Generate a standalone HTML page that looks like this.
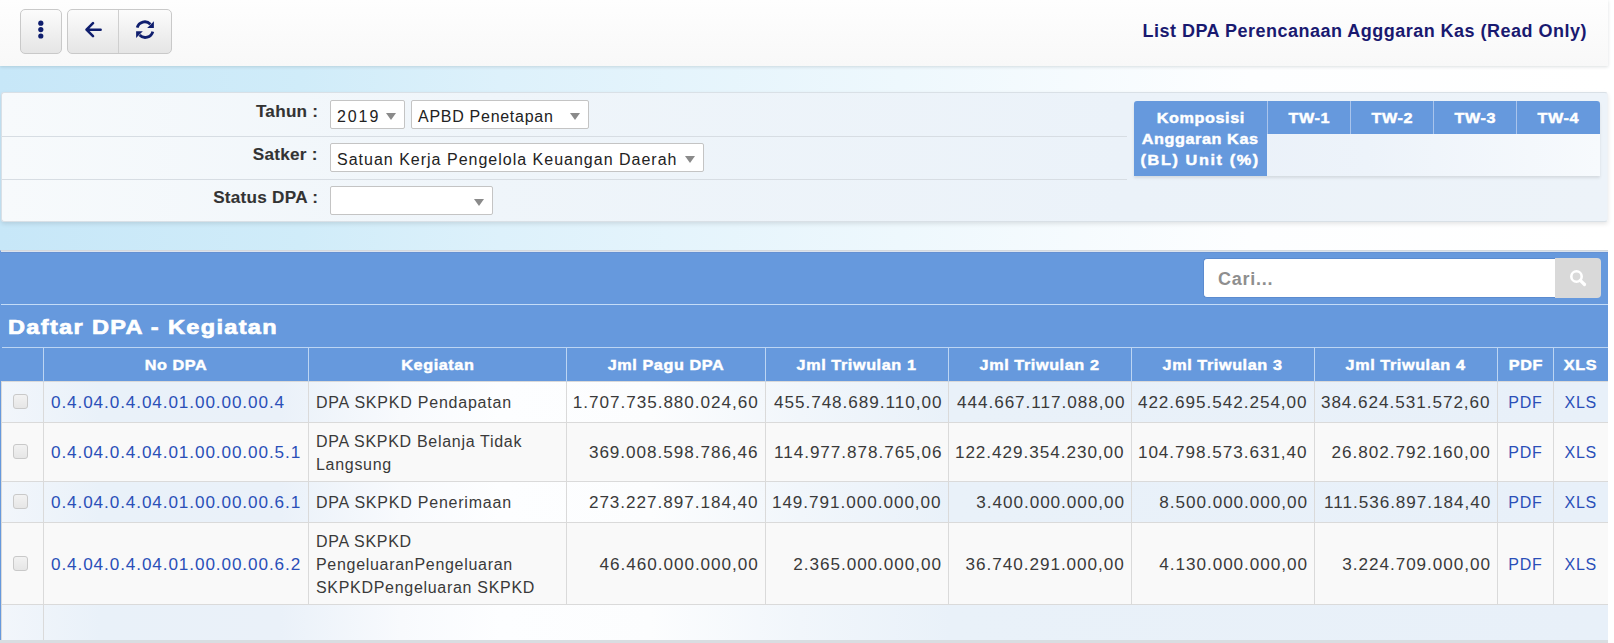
<!DOCTYPE html>
<html><head><meta charset="utf-8"><style>
*{box-sizing:border-box}
html,body{margin:0;padding:0;width:1614px;height:643px;overflow:hidden;background:#fff;font-family:"Liberation Sans",sans-serif}
#wrap{position:absolute;left:0;top:0;width:1608px;height:643px;background:linear-gradient(90deg,rgb(199,231,248) 0px,rgb(208,236,249) 300px,rgb(221,241,251) 500px,rgb(238,248,253) 900px,rgb(253,254,255) 1250px,#fff 1608px)}
#hdr{position:absolute;left:0;top:0;width:1608px;height:66px;background:linear-gradient(#fefefe,#f8f8f8);box-shadow:0 1px 3px rgba(40,60,70,.16)}
.btn{position:absolute;top:9px;height:45px;border:1px solid #c9c9c9;border-radius:5px;background:linear-gradient(#fcfcfc,#e5e5e5)}
.btn svg{position:absolute}
#title{position:absolute;right:21px;top:21px;font-weight:bold;font-size:18px;letter-spacing:0.49px;color:#191970;white-space:nowrap}

#filter{position:absolute;left:1px;top:92px;width:1607px;height:130px;border:1px solid #d9e0e6;border-right-color:#eef2f6;border-radius:3px;background:linear-gradient(90deg,#f7fafc 0%,#eff5fa 30%,#ebf2f9 70%,#edf3f9 100%);box-shadow:0 2px 4px rgba(0,0,0,.10)}
.frow{position:absolute;left:0;width:1125px;border-bottom:1px solid #d7dde3}
.flab b{display:inline-block;transform:scaleX(1.07);transform-origin:100% 50%}
.flab{position:absolute;right:1289px;font-weight:bold;font-size:16px;letter-spacing:0.25px;-webkit-text-stroke:0.1px #333;color:#333;white-space:nowrap}
.sel{position:absolute;height:29px;border:1px solid #c4c4c4;border-radius:2px;background:#fff;font-size:16px;color:#222;padding-left:6px;line-height:31px;white-space:nowrap;letter-spacing:0.7px}
.sel .car{position:absolute;right:8px;top:12px;width:0;height:0;border-left:5px solid transparent;border-right:5px solid transparent;border-top:7px solid #8a8a8a}

#komp{position:absolute;left:1134px;top:101px;width:466px;height:75px;box-shadow:0 2px 3px rgba(0,0,0,.10);background:linear-gradient(90deg,#e9f0f8 0%,#edf3fa 50%,#f7fafd 100%);border-radius:3px 3px 0 0;overflow:hidden}
.kh{position:absolute;top:0;background:#6699dd;color:#fff;font-weight:bold;font-size:15px;letter-spacing:0.55px;-webkit-text-stroke:0.45px #fff;text-align:center;white-space:nowrap}

#tbl{position:absolute;left:0;top:250px;width:1608px;height:393px;border:1px solid #d3d8dd;border-left-color:transparent;border-bottom:none;border-right:none;background:#6699dd}
#search{position:absolute;left:1202px;top:7px;width:353px;height:40px;background:#fff;border-radius:4px 0 0 4px;border:1px solid #5b8bcf;border-right:none}
#search span{position:absolute;left:14px;top:9.8px;font-size:18px;font-weight:bold;color:#8f8f8f;letter-spacing:0.75px}
#sbtn{position:absolute;left:1554px;top:7px;width:46px;height:40px;background:#d9d9d9;border-radius:0 4px 4px 0}
#caption{position:absolute;left:0;top:53px;width:1607px;height:43px;border-top:1px solid #c4dcf7;color:#fff;font-weight:bold;font-size:21px;letter-spacing:1.2px;padding-left:7px;line-height:44px;-webkit-text-stroke:0.7px #fff}
#caption span{display:inline-block;transform:scaleX(1.12);transform-origin:0 50%}
table{position:absolute;left:0;top:96px;border-collapse:collapse;table-layout:fixed;width:1606px}
th b,.kh b{display:inline-block;transform:scaleX(1.08)}
th{background:#6699dd;color:#fff;font-weight:bold;font-size:15px;letter-spacing:0.55px;-webkit-text-stroke:0.45px #fff;height:34px;border:1px solid #bcd5f3;border-bottom:none;text-align:center;padding:0;white-space:nowrap}
td{border:1px solid #dadada;font-size:16px;color:#3a3a3a;padding:2px 7px 0;white-space:nowrap;letter-spacing:0.78px;vertical-align:middle}
td.n{text-align:right;letter-spacing:0.9px;padding:2px 6px 0 2px}
.v{display:inline-block;transform:scaleX(1.07);transform-origin:100% 50%}
td.lk .v{transform-origin:0 50%}
td.lk{color:#2a4fb8;letter-spacing:0.85px}
td.lk2{color:#2a4fb8;text-align:center}
tr.odd td{background:linear-gradient(90deg,#f2f6fb 0px,#e9f1f9 100px,#eaf1f9 280px,#f8fafd 400px,#fdfeff 500px,#fcfdfe 650px,#f1f6fb 800px,#e9f1f9 950px,#e8f0f9 1608px) fixed}
tr.even td{background:#f9f9f9}
.cb{display:block;margin:-3px 0 0 4px;width:15px;height:15px;border:1px solid #c9c9c9;border-radius:3px;background:linear-gradient(#f2f2f2,#e6e6e6)}
td:last-child,th:last-child{border-right:none}
.kg{white-space:normal;line-height:23px;letter-spacing:0.7px}
</style></head><body>
<div id="wrap">
  <div id="hdr">
    <div class="btn" style="left:20px;width:42px"></div>
    <div class="btn" style="left:67px;width:105px"></div>
    <div style="position:absolute;left:118px;top:10px;width:1px;height:43px;background:#cfcfcf"></div>
    <svg style="position:absolute;left:0;top:0" width="200" height="66" viewBox="0 0 200 66">
      <g fill="#0f1e6e"><circle cx="40.8" cy="23.2" r="2.6"/><circle cx="40.8" cy="29.6" r="2.6"/><circle cx="40.8" cy="36" r="2.6"/></g>
      <g fill="none" stroke="#0f1e6e" stroke-width="2.6" stroke-linecap="round" stroke-linejoin="round"><path d="M93 23.2 L86.5 29.7 L93 36.2 M87 29.7 H100.6"/></g>
      <g fill="none" stroke="#0f1e6e" stroke-width="2.8"><path d="M137.2 27.6 A7.8 7.8 0 0 1 150.4 24.2"/><path d="M152.8 31.6 A7.8 7.8 0 0 1 139.6 35"/></g>
      <g fill="#0f1e6e"><path d="M153.9 21.2 L153.9 27.9 L147.2 27.9 Z"/><path d="M136.1 38 L136.1 31.3 L142.8 31.3 Z"/></g>
    </svg>
    <div id="title">List DPA Perencanaan Agggaran Kas (Read Only)</div>
  </div>

  <div id="filter">
    <div class="frow" style="top:0;height:44px"></div>
    <div class="frow" style="top:44px;height:43px"></div>
    <div class="flab" style="top:10px"><b>Tahun :</b></div>
    <div class="flab" style="top:53px"><b>Satker :</b></div>
    <div class="flab" style="top:96px"><b>Status DPA :</b></div>
  </div>
  <div class="sel" style="left:330px;top:100px;width:75px;letter-spacing:1.9px">2019<i class="car"></i></div>
  <div class="sel" style="left:411px;top:100px;width:178px;letter-spacing:0.72px">APBD Penetapan<i class="car"></i></div>
  <div class="sel" style="left:330px;top:143px;width:374px;letter-spacing:1px">Satuan Kerja Pengelola Keuangan Daerah<i class="car"></i></div>
  <div class="sel" style="left:330px;top:186px;width:163px"><i class="car"></i></div>
  <div id="komp">
    <div class="kh" style="left:0;width:133px;height:75px;padding-top:6px;line-height:21px"><b>Komposisi</b><br><b>Anggaran Kas</b><br><b style="letter-spacing:1.5px">(BL) Unit (%)</b></div>
    <div class="kh" style="left:133px;width:83px;height:33px;line-height:33px;border-left:1px solid #a9c4ec"><b>TW-1</b></div>
    <div class="kh" style="left:216px;width:83px;height:33px;line-height:33px;border-left:1px solid #a9c4ec"><b>TW-2</b></div>
    <div class="kh" style="left:299px;width:83px;height:33px;line-height:33px;border-left:1px solid #a9c4ec"><b>TW-3</b></div>
    <div class="kh" style="left:382px;width:84px;height:33px;line-height:33px;border-left:1px solid #a9c4ec"><b>TW-4</b></div>
  </div>

  <div id="tbl">
    <div style="position:absolute;left:0;top:0;width:1607px;height:1px;background:#dae3ee"></div><div style="position:absolute;left:0;top:1px;width:1607px;height:1px;background:#6490d2"></div>
    <div id="search"><span>Cari...</span></div>
    <div id="sbtn"><svg width="46" height="40" viewBox="0 0 46 40"><circle cx="21.5" cy="18.5" r="5.2" fill="none" stroke="#fff" stroke-width="2.6"/><line x1="25.3" y1="22.3" x2="29.5" y2="26.5" stroke="#fff" stroke-width="3.2" stroke-linecap="round"/></svg></div>
    <div id="caption"><span>Daftar DPA - Kegiatan</span></div>
    <table>
      <colgroup><col style="width:42px"><col style="width:265px"><col style="width:258px"><col style="width:199px"><col style="width:183px"><col style="width:183px"><col style="width:183px"><col style="width:183px"><col style="width:56px"><col style="width:54px"></colgroup>
      <tr><th style="border-left:none"></th><th><b>No DPA</b></th><th><b>Kegiatan</b></th><th><b>Jml Pagu DPA</b></th><th><b>Jml Triwulan 1</b></th><th><b>Jml Triwulan 2</b></th><th><b>Jml Triwulan 3</b></th><th><b>Jml Triwulan 4</b></th><th><b>PDF</b></th><th style="border-right:none"><b>XLS</b></th></tr>
      <tr class="odd" style="height:41px"><td><i class="cb"></i></td><td class="lk"><span class="v">0.4.04.0.4.04.01.00.00.00.4</span></td><td>DPA SKPKD Pendapatan</td><td class="n"><span class="v">1.707.735.880.024,60</span></td><td class="n"><span class="v">455.748.689.110,00</span></td><td class="n"><span class="v">444.667.117.088,00</span></td><td class="n"><span class="v">422.695.542.254,00</span></td><td class="n"><span class="v">384.624.531.572,60</span></td><td class="lk2">PDF</td><td class="lk2">XLS</td></tr>
      <tr class="even" style="height:59px"><td><i class="cb"></i></td><td class="lk"><span class="v">0.4.04.0.4.04.01.00.00.00.5.1</span></td><td class="kg">DPA SKPKD Belanja Tidak<br>Langsung</td><td class="n"><span class="v">369.008.598.786,46</span></td><td class="n"><span class="v">114.977.878.765,06</span></td><td class="n"><span class="v">122.429.354.230,00</span></td><td class="n"><span class="v">104.798.573.631,40</span></td><td class="n"><span class="v">26.802.792.160,00</span></td><td class="lk2">PDF</td><td class="lk2">XLS</td></tr>
      <tr class="odd" style="height:41px"><td><i class="cb"></i></td><td class="lk"><span class="v">0.4.04.0.4.04.01.00.00.00.6.1</span></td><td>DPA SKPKD Penerimaan</td><td class="n"><span class="v">273.227.897.184,40</span></td><td class="n"><span class="v">149.791.000.000,00</span></td><td class="n"><span class="v">3.400.000.000,00</span></td><td class="n"><span class="v">8.500.000.000,00</span></td><td class="n"><span class="v">111.536.897.184,40</span></td><td class="lk2">PDF</td><td class="lk2">XLS</td></tr>
      <tr class="even" style="height:82px"><td><i class="cb"></i></td><td class="lk"><span class="v">0.4.04.0.4.04.01.00.00.00.6.2</span></td><td class="kg">DPA SKPKD<br>PengeluaranPengeluaran<br>SKPKDPengeluaran SKPKD</td><td class="n"><span class="v">46.460.000.000,00</span></td><td class="n"><span class="v">2.365.000.000,00</span></td><td class="n"><span class="v">36.740.291.000,00</span></td><td class="n"><span class="v">4.130.000.000,00</span></td><td class="n"><span class="v">3.224.709.000,00</span></td><td class="lk2">PDF</td><td class="lk2">XLS</td></tr>
      <tr class="odd" style="height:36px"><td></td><td colspan="9"></td></tr>
    </table>
    <div id="tbot" style="position:absolute;left:-1px;top:389px;width:1608px;height:4px;background:#d9dde1"></div>
  </div>
</div>
</body></html>
